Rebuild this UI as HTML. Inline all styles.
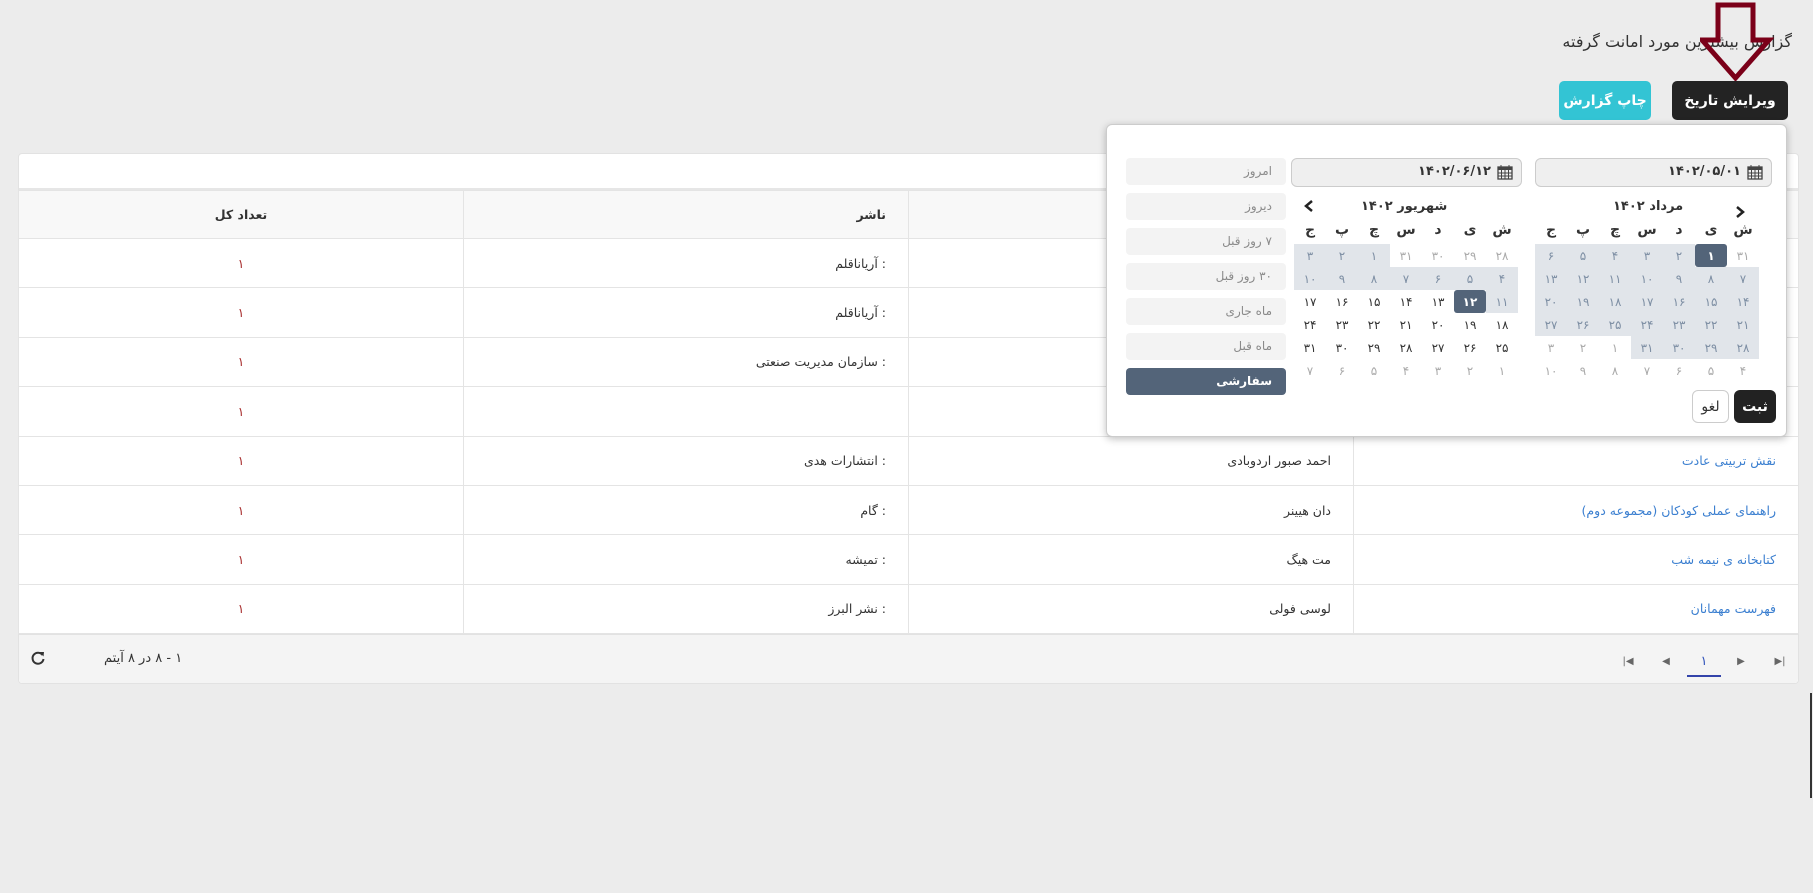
<!DOCTYPE html>
<html><head><meta charset="utf-8"><style>
*{box-sizing:border-box;margin:0;padding:0}
body{width:1813px;height:893px;overflow:hidden;background:#ececec;font-family:"DejaVu Sans","Liberation Sans",sans-serif;position:relative;color:#333}
.abs{position:absolute}
.title{right:21px;top:32px;font-size:16px;color:#333;direction:rtl}
.btn{top:81px;height:39px;border-radius:5px;color:#fff;font-size:14px;font-weight:bold;display:flex;align-items:center;justify-content:center;direction:rtl}
.card{left:18px;top:153px;width:1781px;height:531px;background:#fff;border:1px solid #e2e2e2;border-radius:4px}
table{position:absolute;left:18px;top:190px;width:1781px;border-collapse:collapse;direction:rtl;font-size:12.5px;table-layout:fixed}
td,th{border:1px solid #e4e4e4;height:49.4px;text-align:right;padding-right:22px;font-weight:normal;width:25%}
th{background:#f8f8f8;font-weight:bold;height:48px}
td.n,th.n{text-align:center;padding:0}
td.n{color:#a33}
td.l{color:#3b7fd0}
.foot{left:19px;top:634px;width:1779px;height:49px;background:#f4f4f4;border-top:1px solid #e2e2e2;border-radius:0 0 4px 4px}
.pg{top:644px;width:34px;height:34px;font-size:10px;color:#666;display:flex;align-items:center;justify-content:center}
.pop{left:1106px;top:124px;width:681px;height:313px;background:#fff;border:1px solid #ccc;border-radius:6px;box-shadow:0 2px 8px rgba(0,0,0,.25)}
.pre{left:1126px;width:160px;height:27px;background:#f3f3f3;border-radius:4px;font-size:12px;color:#8a8a8a;direction:rtl;padding:6px 14px 0 0}
.inp{top:158px;height:29px;background:#efefef;border:1px solid #ccc;border-radius:6px;direction:rtl;font-size:13px;font-weight:bold;color:#333;padding:5px 8px 0 0;display:flex;align-items:flex-start;gap:6px}
.cal{top:244px;width:224px;display:grid;grid-template-columns:repeat(7,32px);grid-auto-rows:23px;direction:rtl;font-size:12px}
.cal div{display:flex;align-items:center;justify-content:center;color:#333}
.cal .o{color:#aaa}
.cal .r{background:#e1e5ea;color:#7e8fa4}
.cal .s{background:#536479;color:#fff;font-weight:bold;border-radius:3px}
.wd{top:222px;width:224px;display:grid;grid-template-columns:repeat(7,32px);direction:rtl;font-size:14px;font-weight:bold;text-align:center}
.mt{top:199px;font-size:13px;font-weight:bold;direction:rtl}
</style></head><body>
<div class="abs title">گزارش بیشترین مورد امانت گرفته</div>
<svg class="abs" style="left:1700px;top:2px" width="74" height="80"><path d="M18 3 H53 V38 H69 L35.5 76 L2 38 H18 Z" fill="none" stroke="#7b0019" stroke-width="5"/></svg>
<div class="abs btn" style="left:1672px;width:116px;background:#232323">ویرایش تاریخ</div>
<div class="abs btn" style="left:1559px;width:92px;background:#33c4d4">چاپ گزارش</div>
<div class="abs card"></div>
<div class="abs" style="left:19px;top:188px;width:1779px;height:2px;background:#e6e6e6"></div>
<table>
<tr><th>عنوان</th><th>نویسنده</th><th>ناشر</th><th class="n">تعداد کل</th></tr>
<tr><td class="l"></td><td></td><td>: آریاناقلم</td><td class="n">۱</td></tr>
<tr><td class="l"></td><td></td><td>: آریاناقلم</td><td class="n">۱</td></tr>
<tr><td class="l"></td><td></td><td>: سازمان مدیریت صنعتی</td><td class="n">۱</td></tr>
<tr><td class="l"></td><td></td><td></td><td class="n">۱</td></tr>
<tr><td class="l">نقش تربیتی عادت</td><td>احمد صبور اردوبادی</td><td>: انتشارات هدی</td><td class="n">۱</td></tr>
<tr><td class="l">راهنمای عملی کودکان (مجموعه دوم)</td><td>دان هیینر</td><td>: گام</td><td class="n">۱</td></tr>
<tr><td class="l">کتابخانه ی نیمه شب</td><td>مت هیگ</td><td>: تمیشه</td><td class="n">۱</td></tr>
<tr><td class="l">فهرست مهمانان</td><td>لوسی فولی</td><td>: نشر البرز</td><td class="n">۱</td></tr>
</table>
<div class="abs foot"></div>
<div class="abs" style="left:104px;top:651px;font-size:13px;direction:rtl">۱ - ۸ در ۸ آیتم</div>
<svg class="abs" style="left:30px;top:650px" width="16" height="16" viewBox="0 0 16 16"><path d="M12.5 5 A5.5 5.5 0 1 0 13.5 9" fill="none" stroke="#333" stroke-width="2"/><path d="M9.5 2 L14 2 L13.5 6.5 Z" fill="#333"/></svg>
<div class="abs pg" style="left:1763px">▶|</div>
<div class="abs pg" style="left:1724px">▶</div>
<div class="abs pg" style="left:1687px;color:#3355bb;font-size:13px">۱</div>
<div class="abs" style="left:1687px;top:675px;width:34px;height:2px;background:#3344aa"></div>
<div class="abs pg" style="left:1649px">◀</div>
<div class="abs pg" style="left:1611px">|◀</div>

<div class="abs pop"></div>
<div class="abs pre" style="top:158px">امروز</div>
<div class="abs pre" style="top:193px">دیروز</div>
<div class="abs pre" style="top:228px">۷ روز قبل</div>
<div class="abs pre" style="top:263px">۳۰ روز قبل</div>
<div class="abs pre" style="top:298px">ماه جاری</div>
<div class="abs pre" style="top:333px">ماه قبل</div>
<div class="abs pre" style="top:368px;background:#536479;color:#fff;font-weight:bold">سفارشی</div>

<div class="abs inp" style="left:1535px;width:237px"><svg width="16" height="16" viewBox="0 0 16 16"><rect x="1" y="3" width="14" height="12" fill="none" stroke="#444" stroke-width="1.3"/><rect x="1" y="3" width="14" height="3" fill="#444"/><path d="M4 1v4M12 1v4M1 9h14M1 12h14M4.5 6v9M8 6v9M11.5 6v9" stroke="#444" stroke-width="1"/></svg>۱۴۰۲/۰۵/۰۱</div>
<div class="abs inp" style="left:1291px;width:231px"><svg width="16" height="16" viewBox="0 0 16 16"><rect x="1" y="3" width="14" height="12" fill="none" stroke="#444" stroke-width="1.3"/><rect x="1" y="3" width="14" height="3" fill="#444"/><path d="M4 1v4M12 1v4M1 9h14M1 12h14M4.5 6v9M8 6v9M11.5 6v9" stroke="#444" stroke-width="1"/></svg>۱۴۰۲/۰۶/۱۲</div>

<div class="abs mt" style="left:1613px">مرداد ۱۴۰۲</div>
<svg class="abs" style="left:1735px;top:205px" width="10" height="14"><path d="M2 2 L8 7 L2 12" fill="none" stroke="#222" stroke-width="2.5"/></svg>
<div class="abs mt" style="left:1361px">شهریور ۱۴۰۲</div>
<svg class="abs" style="left:1304px;top:199px" width="10" height="14"><path d="M8 2 L2 7 L8 12" fill="none" stroke="#222" stroke-width="2.5"/></svg>

<div class="abs wd" style="left:1535px"><span>ش</span><span>ی</span><span>د</span><span>س</span><span>چ</span><span>پ</span><span>ج</span></div>
<div class="abs wd" style="left:1294px"><span>ش</span><span>ی</span><span>د</span><span>س</span><span>چ</span><span>پ</span><span>ج</span></div>

<div class="abs cal" style="left:1535px">
<div class="o">۳۱</div><div class="s">۱</div><div class="r">۲</div><div class="r">۳</div><div class="r">۴</div><div class="r">۵</div><div class="r">۶</div>
<div class="r">۷</div><div class="r">۸</div><div class="r">۹</div><div class="r">۱۰</div><div class="r">۱۱</div><div class="r">۱۲</div><div class="r">۱۳</div>
<div class="r">۱۴</div><div class="r">۱۵</div><div class="r">۱۶</div><div class="r">۱۷</div><div class="r">۱۸</div><div class="r">۱۹</div><div class="r">۲۰</div>
<div class="r">۲۱</div><div class="r">۲۲</div><div class="r">۲۳</div><div class="r">۲۴</div><div class="r">۲۵</div><div class="r">۲۶</div><div class="r">۲۷</div>
<div class="r">۲۸</div><div class="r">۲۹</div><div class="r">۳۰</div><div class="r">۳۱</div><div class="o">۱</div><div class="o">۲</div><div class="o">۳</div>
<div class="o">۴</div><div class="o">۵</div><div class="o">۶</div><div class="o">۷</div><div class="o">۸</div><div class="o">۹</div><div class="o">۱۰</div>
</div>
<div class="abs cal" style="left:1294px">
<div class="o">۲۸</div><div class="o">۲۹</div><div class="o">۳۰</div><div class="o">۳۱</div><div class="r">۱</div><div class="r">۲</div><div class="r">۳</div>
<div class="r">۴</div><div class="r">۵</div><div class="r">۶</div><div class="r">۷</div><div class="r">۸</div><div class="r">۹</div><div class="r">۱۰</div>
<div class="r">۱۱</div><div class="s">۱۲</div><div>۱۳</div><div>۱۴</div><div>۱۵</div><div>۱۶</div><div>۱۷</div>
<div>۱۸</div><div>۱۹</div><div>۲۰</div><div>۲۱</div><div>۲۲</div><div>۲۳</div><div>۲۴</div>
<div>۲۵</div><div>۲۶</div><div>۲۷</div><div>۲۸</div><div>۲۹</div><div>۳۰</div><div>۳۱</div>
<div class="o">۱</div><div class="o">۲</div><div class="o">۳</div><div class="o">۴</div><div class="o">۵</div><div class="o">۶</div><div class="o">۷</div>
</div>
<div class="abs" style="left:1734px;top:390px;width:42px;height:33px;background:#222;border-radius:6px;color:#fff;font-weight:bold;font-size:14px;display:flex;align-items:center;justify-content:center">ثبت</div>
<div class="abs" style="left:1692px;top:390px;width:37px;height:33px;background:#fff;border:1px solid #ccc;border-radius:6px;font-size:14px;display:flex;align-items:center;justify-content:center">لغو</div>
<div class="abs" style="left:1810px;top:693px;width:2px;height:105px;background:#333"></div>
</body></html>
